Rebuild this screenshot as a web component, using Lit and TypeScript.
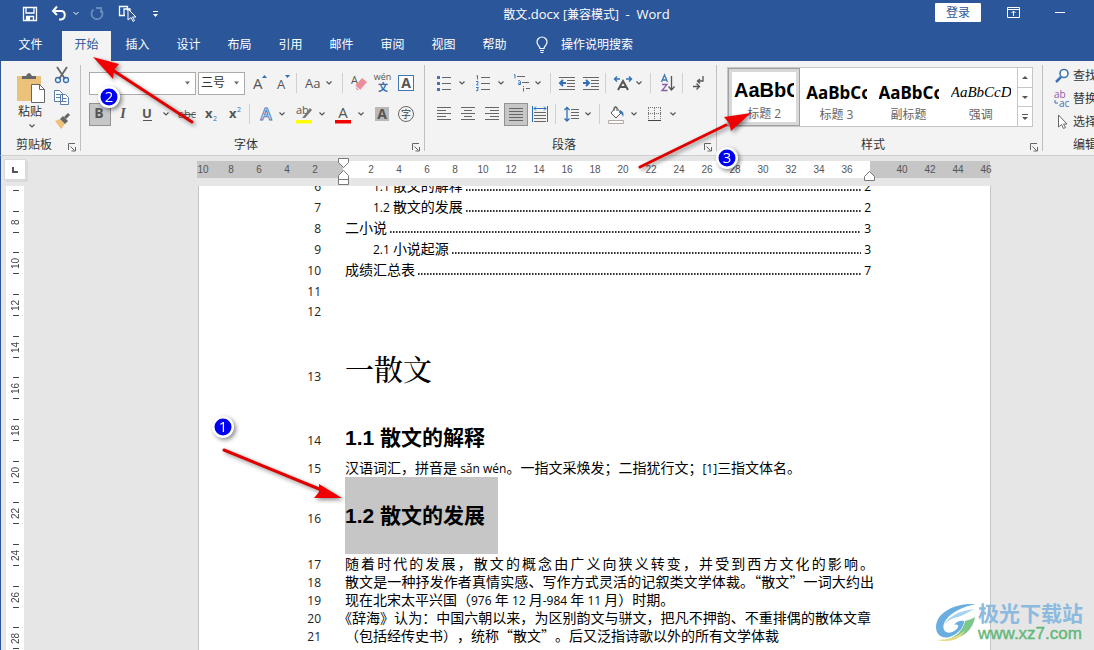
import { LitElement, html, css, svg } from "lit";
import { customElement, property } from "lit/decorators.js";

const chev = (x: number, y = 12) =>
  svg`<path d="M${x - 2.5} ${y - 1.5}l2.5 2.5 2.5-2.5" fill="none" stroke="#555" stroke-width="1.2"/>`;
const lines = (x1: number, x2: number, ys: number[], c = "#666") =>
  svg`<path d="${ys.map((y) => `M${x1} ${y}H${x2}`).join("")}" stroke="${c}" fill="none"/>`;
const icon = (w: number, body: unknown, h = 24) =>
  html`<svg width="${w}" height="${h}" viewBox="0 0 ${w} ${h}" aria-hidden="true">${body}</svg>`;

type Tool = { label?: string; w: number; body?: unknown; on?: boolean };

const fontTop: Tool[] = [
  { label: "增大字号", w: 28, body: svg`<text x="8" y="18" class="g" font-size="15">A</text><path d="M17 7l2.5-3 2.5 3z" fill="#2f6fb5"/>` },
  { label: "减小字号", w: 22, body: svg`<text x="4" y="18" class="g" font-size="13">A</text><path d="M12 4l2.5 3 2.5-3z" fill="#2f6fb5"/>` },
  { w: 4 },
  { label: "更改大小写", w: 42, body: svg`<text x="6" y="17" class="g" font-size="13">Aa</text>${chev(30)}` },
  { w: 4 },
  { label: "清除格式", w: 26, body: svg`<text x="6" y="13" class="g" font-size="11">A</text><path d="M10 15l7-8 5 4-7 8h-3z" fill="#ea8d9c"/><path d="M10 15l5 4" stroke="#fff"/>` },
  { label: "拼音指南", w: 24, body: svg`<text x="11.500" y="9" class="g" font-size="9" text-anchor="middle">wén</text><text x="12" y="20" class="cj" font-size="10" fill="#2f6fb5" font-weight="700" text-anchor="middle">文</text>` },
  { label: "字符边框", w: 24, body: svg`<rect x="3.500" y="4.500" width="15" height="15" fill="#fff" stroke="#4177b5"/><text x="11" y="17" class="g" font-weight="700" font-size="14" text-anchor="middle">A</text>` },
];
const fontBottom: Tool[] = [
  { label: "加粗", w: 22, on: true, body: svg`<text x="10" y="16" class="g" font-size="14" font-weight="700" text-anchor="middle">B</text>` },
  { label: "倾斜", w: 24, body: svg`<text x="12" y="16" class="s" font-size="14" font-style="italic" font-weight="700" text-anchor="middle">I</text>` },
  { label: "下划线", w: 38, body: svg`<text x="12" y="16" class="g" font-size="13" font-weight="700" text-anchor="middle">U</text><path d="M8 18.500h9" stroke="#555"/>${chev(31)}` },
  { label: "删除线", w: 26, body: svg`<text x="14" y="16" class="g" font-size="11" text-anchor="middle">abc</text><path d="M5 12.500h18" stroke="#555"/>` },
  { label: "下标", w: 24, body: svg`<text x="6" y="16" class="g" font-size="13" font-weight="700">x</text><text x="14" y="19" fill="#2f6fb5" font-size="7">2</text>` },
  { label: "上标", w: 24, body: svg`<text x="6" y="16" class="g" font-size="13" font-weight="700">x</text><text x="14" y="10" fill="#2f6fb5" font-size="7">2</text>` },
  { w: 6 },
  { label: "文本效果", w: 38, body: svg`<text x="13" y="18" font-size="17" font-weight="600" fill="#fff" stroke="#4a80bd" text-anchor="middle">A</text>${chev(29)}` },
  { label: "突出显示", w: 38, body: svg`<text x="5" y="12" class="g" font-size="11">ab</text><path d="M12 15l7-9 2 2-7 8h-3z" fill="#777"/><path d="M5 18h16v3.500H5z" fill="#ffff00"/>${chev(31)}` },
  { label: "字体颜色", w: 40, body: svg`<text x="14" y="16" class="g" font-size="15" text-anchor="middle">A</text><path d="M6 18h16v3.500H6z" fill="#f00000"/>${chev(32)}` },
  { label: "字符底纹", w: 26, body: svg`<path d="M6 5h14v14H6z" fill="#b9b9b9"/><text x="13" y="17" class="g" font-size="14" font-weight="700" text-anchor="middle">A</text>` },
  { label: "带圈字符", w: 22, body: svg`<circle cx="11" cy="12" r="7.500" fill="none" stroke="#666"/><text x="11" y="16" class="cj" font-size="10" fill="#444" text-anchor="middle">字</text>` },
];
const paraTop: Tool[] = [
  { label: "项目符号", w: 38, body: svg`<path d="M5 5h3v3H5zM5 11h3v3H5zM5 17h3v3H5z" fill="#3c78b8"/>${lines(10, 19, [6.5, 12.5, 18.5])}${chev(30)}` },
  { label: "编号", w: 40, body: svg`<path d="M6.500 5l1-.5v4M6 10.500h2v1.500L6.500 14H8.500M6 16.500h2.500l-1 1.500q2 1.500-1.500 2" stroke="#3c78b8" fill="none"/>${lines(11, 20, [6.5, 12.5, 18.5])}${chev(31)}` },
  { label: "多级列表", w: 38, body: svg`<path d="M4 4l1-.5v4M8 10q2.500-1 2.500.5V13.500H8.500q-1-1.500 2-2M13.500 17v3.500M13.500 15v1" stroke="#3c78b8" fill="none"/>${lines(7, 15, [5.5])}${lines(12, 19, [11.5])}${lines(16, 20, [17.5])}${chev(28)}` },
  { w: 6 },
  { label: "减少缩进", w: 26, body: svg`${lines(5, 21, [6.5, 18.5])}${lines(13, 21, [9.5, 12.5, 15.5])}<path d="M12 12H6M9 9l-3 3 3 3" stroke="#2f6fb5" stroke-width="2" fill="none"/>` },
  { label: "增加缩进", w: 22, body: svg`${lines(3, 19, [6.5, 18.5])}${lines(11, 19, [9.5, 12.5, 15.5])}<path d="M3 12h6M6 9l3 3-3 3" stroke="#2f6fb5" stroke-width="2" fill="none"/>` },
  { w: 8 },
  { label: "中文版式", w: 38, body: svg`<path d="M8 19l5-9 5 9M10 16h6" stroke="#555" stroke-width="2" fill="none"/><path d="M10 8H5M7 5.500L4.500 8 7 10.500M16 8h5M19 5.500L21.500 8 19 10.500" stroke="#2f6fb5" stroke-width="1.400" fill="none"/>${chev(29)}` },
  { w: 6 },
  { label: "排序", w: 26, body: svg`<path d="M7.500 11l3-7 3 7M8.500 9h4" stroke="#3c78b8" stroke-width="1.300" fill="none"/><path d="M8 13.500h5l-5 6h5.500" stroke="#8a5ba5" stroke-width="1.300" fill="none"/><path d="M17.500 5v14M14.500 15.500l3 3.500 3-3.500" stroke="#555" stroke-width="1.300" fill="none"/>` },
  { w: 6 },
  { label: "显示编辑标记", w: 26, body: svg`<path d="M17 5v5h-5M14 8l-2.500 2L14 12.500M7 15.500h6M10.500 12.500l3 3-3 3" stroke="#555" stroke-width="1.300" fill="none"/>` },
];
const paraBottom: Tool[] = [
  { label: "左对齐", w: 24, body: svg`${lines(5, 19, [5.5, 11.5, 17.5])}${lines(5, 14, [8.5, 14.5])}` },
  { label: "居中", w: 24, body: svg`${lines(5, 19, [5.5, 11.5, 17.5])}${lines(8, 16, [8.5, 14.5])}` },
  { label: "右对齐", w: 24, body: svg`${lines(5, 19, [5.5, 11.5, 17.5])}${lines(10, 19, [8.5, 14.5])}` },
  { label: "两端对齐", w: 24, on: true, body: svg`${lines(5, 19, [6.5, 9.5, 12.5, 15.5, 18.5])}` },
  { label: "分散对齐", w: 24, body: svg`<path d="M4.500 4v16M19.500 4v16" stroke="#2f6fb5"/><path d="M6 6.500h12M8 4.500l-2 2 2 2M16 4.500l2 2-2 2" stroke="#2f6fb5" fill="none"/>${lines(6, 18, [10.5, 13.5, 16.5, 19.5])}` },
  { w: 8 },
  { label: "行距", w: 36, body: svg`<path d="M7 5v14M4.500 8L7 5.500 9.500 8M4.500 16.500L7 19l2.500-2.500" stroke="#2f6fb5" stroke-width="1.300" fill="none"/>${lines(11, 19, [7.5, 10.5, 13.5, 16.5])}${chev(28)}` },
  { w: 8 },
  { label: "底纹", w: 40, body: svg`<path d="M12 5l5 6-5 5-5-5z" fill="#fff" stroke="#555"/><path d="M10 9V5.500q1.500-2 3 0V9" fill="none" stroke="#555"/><path d="M16 8q5 2 3 7-1-4-4-4z" fill="#3c78b8"/><path d="M4.500 18.500h15v3h-15z" fill="#fff" stroke="#b5a8a0"/>${chev(30)}` },
  { label: "边框", w: 38, body: svg`<path d="M4.500 6v12M10.500 6v12M16.500 6v12M4 5.500h13M4 11.500h13" stroke="#777" stroke-dasharray="1 1" fill="none"/><path d="M4 18.500h13" stroke="#444"/>${chev(29)}` },
];

@customElement("ribbon-group")
export class RibbonGroup extends LitElement {
  @property() name = "";
  static styles = css`
    :host { display: flex; flex-direction: column; box-sizing: border-box; position: relative; }
    :host::after { content: ""; position: absolute; right: 0; top: 4px; bottom: 4px; width: 1px; background: #c0c0c0; }
    .content { flex: 1; display: flex; min-width: 0; }
    .foot { display: flex; height: 20px; align-items: center; font-size: 12px; color: #333; }
    .name { flex: 1; text-align: center; white-space: nowrap; }
    button { width: 14px; height: 16px; padding: 4px 0 0; border: 0; background: none; display: block; }
    svg { display: block; }
  `;
  render() {
    return html`<div class="content"><slot></slot></div>
      <div class="foot"><span class="name">${this.name}</span>
        <button aria-label="${this.name}设置">${icon(10, svg`<path d="M1.500 8V1.500H8M3.500 4.500l4 4M8.500 5v4h-4" stroke="#666" fill="none"/>`, 10)}</button></div>`;
  }
}

const latin = (s: string) => html`<span class="latin">${s}</span>`;
const toc = [
  { n: 6, sub: true, num: "1.1", t: "散文的解释", p: 2 },
  { n: 7, sub: true, num: "1.2", t: "散文的发展", p: 2 },
  { n: 8, sub: false, num: "", t: "二小说", p: 3 },
  { n: 9, sub: true, num: "2.1", t: "小说起源", p: 3 },
  { n: 10, sub: false, num: "", t: "成绩汇总表", p: 7 },
];

@customElement("app-root")
export class AppRoot extends LitElement {
  static styles = css`
    :host { display: flex; flex-direction: column; height: 100vh; overflow: hidden; position: relative; background: #e6e6e6; font: 12px/16px "Open Sans", "Noto Sans CJK SC", sans-serif; color: #333; }
    * { box-sizing: border-box; }
    svg { display: block; flex: none; }
    button { font: inherit; color: inherit; border: 0; background: none; padding: 0; display: block; }
    .g { fill: #555; }
    .s { fill: #555; font-family: "Liberation Serif", serif; }
    .cj { font-family: "Noto Sans CJK SC", sans-serif; }

    .title { display: flex; height: 28px; flex: none; align-items: center; background: #2b579a; color: #fff; }
    .quick { display: flex; width: 170px; padding-left: 16px; }
    .caption { flex: 1; padding-left: 68px; text-align: center; white-space: pre; }
    .caption span { font-size: 13px; }
    .login { width: 46px; height: 19px; margin-bottom: 3px; background: #fff; color: #2b579a; border-radius: 1px; line-height: 19px; }
    .winbtns { display: flex; width: 113px; padding-left: 9px; margin-bottom: 3px; }
    .tabs { display: flex; height: 33px; flex: none; align-items: flex-end; background: #2b579a; color: #fff; padding-left: 5px; }
    .tabs a { color: inherit; text-decoration: none; width: 51px; height: 30px; line-height: 28px; text-align: center; white-space: nowrap; }
    .tabs .file { margin-right: 6px; }
    .tabs .active { width: 49px; margin-right: 1px; background: #f3f3f3; color: #2b579a; }
    .tell { display: flex; height: 30px; align-items: center; gap: 12px; padding: 0 0 2px 15px; }

    .ribbon { display: flex; height: 95px; flex: none; background: #f3f3f3; border-bottom: 1px solid #d0d0d0; border-left: 1px solid #2b579a; }
    .clip { width: 80px; }
    .font { width: 344px; }
    .para { width: 292px; }
    .styles { flex: 1; min-width: 326px; }
    .edit { width: 51px; overflow: hidden; }
    .paste { width: 40px; margin-left: 9px; padding-top: 5px; text-align: center; color: #333; }
    .paste svg { margin: auto; }
    .clipside { display: flex; flex-direction: column; padding: 3px 0 0; }
    .toolrows { display: flex; flex-direction: column; gap: 7px; padding: 10px 0 0 8px; }
    .para .toolrows { padding-left: 7px; }
    .row { display: flex; height: 24px; align-items: center; }
    .row .on { background: #c6c6c6; outline: 1px solid #929292; outline-offset: -1px; height: 23px; display: flex; align-items: center; }
    .combo { display: flex; height: 23px; border: 1px solid #ababab; background: #fff; align-items: center; }
    .face { width: 107px; margin-right: 2px; }
    .size { width: 47px; }
    .combo input { border: 0; background: none; font: inherit; color: #333; min-width: 0; flex: 1; padding: 0 0 0 2px; outline: 0; }

    .gallery { display: flex; flex: 1; min-width: 0; height: 60px; margin: 6px 10px 0; background: #fff; border: 1px solid #c6c6c6; }
    .style { flex: 1 1 72px; min-width: 0; padding: 5px 6px 0; overflow: hidden; text-align: center; color: #666; }
    .style.chosen { border: 1px solid #a0a0a0; box-shadow: inset 0 0 0 3px #d8d8d8; padding: 4px 5px 0; }
    .sample { display: block; overflow: hidden; height: 30px; line-height: 31px; text-align: left; color: #000; white-space: nowrap; }
    .h2s { font: bold 20px/28px "Liberation Sans", sans-serif; }
    .h3s { font-weight: 700; font-size: 17px; font-family: "Noto Sans", sans-serif; }
    .ems { font: italic 15px/30px "Liberation Serif", serif; }
    .scroll { flex: none; width: 15px; border-left: 1px solid #c6c6c6; display: flex; flex-direction: column; }
    .scroll button { flex: 1; display: grid; place-items: center; }
    .scroll button + button { border-top: 1px solid #c6c6c6; }
    .edits { padding: 3px 0 0 9px; display: flex; flex-direction: column; }
    .edits button { display: flex; align-items: center; height: 23px; gap: 2px; white-space: nowrap; }
    .edits .lab { padding-left: 21px; line-height: 23px; white-space: nowrap; }

    .rulerbar { display: flex; height: 30px; flex: none; border-left: 1px solid #2b579a; }
    .corner { width: 196px; padding: 3px 0 0 3px; }
    .tabsel { width: 22px; height: 21px; background: #fff; border: 1px solid #d8d8d8; display: grid; place-items: center; box-shadow: 2px 2px 0 #dadada; }
    .ruler { flex: 1; min-width: 0; margin: 5px 104px 8px 0; display: flex; position: relative; font: 10px/18px "Liberation Sans", sans-serif; color: #555; background: #fff; }
    .ruler span { flex: 0 0 28px; text-align: center; }
    .neg, .pos, .out { display: flex; }
    .neg { width: 146px; overflow: hidden; justify-content: flex-end; padding-right: 14px; background: #c6c6c6; }
    .pos { flex: 1; min-width: 0; padding-left: 14px; }
    .out { width: 120px; padding-left: 18px; background: #c6c6c6; }
    .mark { position: absolute; left: 140px; top: -4px; }
    .rmark { position: absolute; right: 114px; top: 9px; }

    .work { flex: 1; display: flex; min-height: 0; overflow: hidden; border-left: 1px solid #2b579a; }
    .vruler { width: 18px; margin: 0 0 -9px 5px; background: #fff; display: flex; flex-direction: column; padding-top: 15px; font: 10px/12px "Liberation Sans", sans-serif; color: #444; position: relative; }
    .vruler::before { content: ""; position: absolute; left: 7px; top: 4px; width: 6px; height: 1px; background: #444; }
    .vcell { flex: 1; display: flex; flex-direction: column; align-items: center; justify-content: center; padding-left: 1px; }
    .vcell::before, .vcell::after { content: ""; width: 6px; height: 1px; background: #444; }
    .vcell span { writing-mode: vertical-rl; transform: rotate(180deg); height: 20px; text-align: center; line-height: 12px; }
    .page { flex: 1; min-width: 0; margin: 0 103px 0 174px; background: #fff; border-left: 1px solid #c6c6c6; border-right: 1px solid #c6c6c6; padding: 0 116px 0 94px; overflow: hidden; color: #000; font: 14px/21px "Noto Sans CJK SC", sans-serif; }
    .sheet { margin-top: -11px; }
    .line { display: flex; align-items: baseline; height: 18px; line-height: 18px; white-space: nowrap; text-spacing-trim: space-all; }
    .line > .no { width: 28px; margin-right: 24px; text-align: right; font-family: "Open Sans", sans-serif; font-size: 12px; color: #222; flex: none; }
    .line p { margin: 0; }
    .latin { font-family: "Open Sans", sans-serif; font-size: 12px; }
    .toc { height: 21px; line-height: 21px; margin-right: 3px; }
    .toc .entry { flex: 1; display: flex; color: inherit; text-decoration: none; gap: 3px; overflow: hidden; align-items: baseline; }
    .sub .entry { padding-left: 28px; }
    .dots { flex: 1; height: 2px; background: repeating-linear-gradient(90deg, #333 0 1px, #888 1px 2px, transparent 2px 3px); }
    .blank { height: 20px; line-height: 20px; }
    .line h1, .line h2 { margin: 0; font-weight: 400; }
    .lh1 { height: 96px; }
    .lh1 h1 { font: 500 29px/102px "Liberation Serif", "Noto Serif CJK SC", "Noto Sans CJK SC", serif; }
    .lh2 { height: 42px; }
    .line h2 { font: bold 21px/43px "Liberation Sans", "Noto Sans CJK SC", sans-serif; }
    .l15 { height: 19px; }
    .line.tall { height: 77px; }
    .line.tall h2 { line-height: 77px; background: #c6c6c6; padding-right: 13px; }
    .line .full { flex: 1; text-align: justify; text-align-last: justify; }
    .norm { text-spacing-trim: normal; }
    .trim { text-spacing-trim: trim-start; }
    .narrow .full { margin-right: 3px; }

    .notes { position: absolute; left: 0; top: 0; pointer-events: none; filter: drop-shadow(2px 2px 2px rgba(0,0,0,.45)); }
    .notes text { font: 15px "Open Sans", sans-serif; fill: #fff; }
    .brand { position: absolute; right: 11px; bottom: 6px; display: flex; align-items: center; }
    .brand div { display: flex; flex-direction: column; }
    .bname { font: 700 21px/23px "Noto Sans CJK SC", sans-serif; color: #8cbadf; }
    .burl { font: 17px/20px "Liberation Sans", sans-serif; color: #62b87a; -webkit-text-stroke: 0.4px #62b87a; }
  `;

  private tools(list: Tool[]) {
    return list.map((t) => t.label
      ? html`<button class="${t.on ? "on" : ""}" aria-label="${t.label}">${icon(t.w, t.body)}</button>`
      : icon(t.w, svg`<path d="M${t.w / 2 - 0.5} 2v20" stroke="#d0d0d0"/>`));
  }

  private badge(x: number, y: number, n: number) {
    return svg`<circle cx="${x}" cy="${y}" r="11" fill="#fff"/><circle cx="${x}" cy="${y}" r="8.500" fill="#0000f0"/><text x="${x}" y="${y + 5}" text-anchor="middle">${n}</text>`;
  }

  render() {
    const nums = (a: number[]) => a.map((n) => html`<span>${n}</span>`);
    return html`
      <header class="title">
        <div class="quick">
          <button aria-label="保存">${icon(28, svg`<path d="M7.500 5.500h13v13h-13zM10 6v5h8V6M10.500 18.500v-4h7v4" fill="none" stroke="#fff" stroke-width="1.300"/><path d="M11 15h3v3h-3z" fill="#fff"/>`)}</button>
          <button aria-label="撤消">${icon(38, svg`<path d="M13 4.500l-4 4.500 4 4M9.500 9H17c5 0 5 8 0 8.500h-2" fill="none" stroke="#fff" stroke-width="2"/><path d="M29.500 10l2.500 2.500 2.500-2.500" fill="none" stroke="#fff"/>`)}</button>
          <button aria-label="恢复">${icon(30, svg`<path d="M11.500 7.500a5.500 5.500 0 1 0 7 0M19 11V6h-5" fill="none" stroke="#6a8bbd" stroke-width="1.800"/>`)}</button>
          <button aria-label="触摸模式">${icon(28, svg`<path d="M13 13.500H7.500v-9h8v4M12 13V7h6v4" fill="none" stroke="#fff" stroke-width="1.300"/><path d="M16 7v11l3-2.500 2 4 1.500-1-2-3.500h3.500z" fill="#2b579a" stroke="#fff"/>`)}</button>
          <button aria-label="自定义">${icon(28, svg`<path d="M13 9.500h5" stroke="#fff"/><path d="M13 12h5l-2.500 3z" fill="#fff"/>`)}</button>
        </div>
        <div class="caption">散文<span>.docx </span>[兼容模式]<span>  -  Word</span></div>
        <button class="login">登录</button>
        <div class="winbtns">
          <button aria-label="功能区显示选项">${icon(46, svg`<path d="M17.500 6.500h12v10h-12zM17.500 8.500h12M23.500 15v-5M21.500 12l2-2 2 2" fill="none" stroke="#fff"/>`)}</button>
          <button aria-label="最小化">${icon(46, svg`<path d="M19 11.500h10" stroke="#fff"/>`)}</button>
        </div>
      </header>
      <nav class="tabs">
        <a class="file" href="#">文件</a><a class="active" href="#">开始</a>
        ${["插入", "设计", "布局", "引用", "邮件", "审阅", "视图", "帮助"].map((t) => html`<a href="#">${t}</a>`)}
        <button class="tell">${icon(14, svg`<path d="M5 12.500C5 10 2 9.500 2 6a5 5 0 0 1 10 0c0 3.500-3 4-3 6.500zM5 14.500h4M5.500 16.500h3" fill="none" stroke="#fff" stroke-width="1.200"/>`, 18)}<span>操作说明搜索</span></button>
      </nav>
      <section class="ribbon">
        <ribbon-group class="clip" name="剪贴板">
          <button class="paste">${icon(32, svg`<path d="M3 5h24v25H3z" fill="#eac27c"/><path d="M8 8V5h4q3-6 6 0h4v3z" fill="#666"/><path d="M17.500 13.500h8l5 5v13h-13z" fill="#fff" stroke="#666"/><path d="M25.500 13.500v5h5" fill="none" stroke="#666"/>`, 33)}粘贴<svg width="40" height="10" viewBox="0 0 40 10">${chev(22, 6)}</svg></button>
          <div class="clipside">
            <button aria-label="剪切">${icon(24, svg`<path d="M7 3l8 12M17 3L9 15" stroke="#666" stroke-width="1.800"/><circle cx="8" cy="16" r="2.500" fill="none" stroke="#2f6fb5" stroke-width="1.300"/><circle cx="16" cy="16" r="2.500" fill="none" stroke="#2f6fb5" stroke-width="1.300"/>`, 22)}</button>
            <button aria-label="复制">${icon(24, svg`<path d="M4.500 4.500h5l3 3v8h-8zM10.500 8.500h5l3 3v7h-8z" fill="#fff" stroke="#5a7ba6"/><path d="M6 8.500h4M6 11.500h4M12.500 12.500h4M12.500 15.500h4" stroke="#4a80bd"/>`, 23)}</button>
            <button aria-label="格式刷">${icon(24, svg`<path d="M5 12l5-2 5 5-4 5z" fill="#efc07c"/><path d="M10 10l3-3 5 5-3 3z" fill="#666"/><path d="M15 9l4-4" stroke="#666" stroke-width="3"/>`, 22)}</button>
          </div>
        </ribbon-group>
        <ribbon-group class="font" name="字体">
          <div class="toolrows">
            <div class="row">
              <div class="combo face"><input aria-label="字体"/>${icon(14, svg`<path d="M4 10.500h5l-2.500 3z" fill="#666"/>`)}</div>
              <div class="combo size"><input aria-label="字号" .value=${"三号"}/>${icon(14, svg`<path d="M4 10.500h5l-2.500 3z" fill="#666"/>`)}</div>
              ${this.tools(fontTop)}
            </div>
            <div class="row">${this.tools(fontBottom)}</div>
          </div>
        </ribbon-group>
        <ribbon-group class="para" name="段落">
          <div class="toolrows">
            <div class="row">${this.tools(paraTop)}</div>
            <div class="row">${this.tools(paraBottom)}</div>
          </div>
        </ribbon-group>
        <ribbon-group class="styles" name="样式">
          <div class="gallery">
            <button class="style chosen"><span class="sample h2s">AaBbC</span>标题 2</button>
            <button class="style"><span class="sample h3s">AaBbCc</span>标题 3</button>
            <button class="style"><span class="sample h3s">AaBbCc</span>副标题</button>
            <button class="style"><span class="sample ems">AaBbCcDc</span>强调</button>
            <div class="scroll">
              <button aria-label="上一行">${icon(8, svg`<path d="M1 6l3-3 3 3z" fill="#555"/>`, 8)}</button>
              <button aria-label="下一行">${icon(8, svg`<path d="M1 3l3 3 3-3z" fill="#555"/>`, 8)}</button>
              <button aria-label="其他">${icon(8, svg`<path d="M1 1.500h6" stroke="#555"/><path d="M1 4l3 3 3-3z" fill="#555"/>`, 8)}</button>
            </div>
          </div>
        </ribbon-group>
        <div class="edit"><div class="edits">
          <button>${icon(19, svg`<circle cx="12" cy="7.500" r="4" fill="#fff" stroke="#3c72b0" stroke-width="1.600"/><path d="M9 11l-5 5" stroke="#3c72b0" stroke-width="2.500"/>`, 20)}查找</button>
          <button>${icon(19, svg`<text x="2" y="9" font-size="10" fill="#8a5ba5">ab</text><text x="7" y="18" font-size="10" fill="#3c72b0">ac</text><path d="M3 11v3h3" stroke="#3c72b0" fill="none"/>`, 20)}替换</button>
          <button>${icon(19, svg`<path d="M6.500 3v12l3-2.500 2 4 2-1-2-3.500h3.500z" fill="#fff" stroke="#666"/>`, 20)}选择</button>
          <span class="lab">编辑</span>
        </div></div>
      </section>
      <div class="rulerbar">
        <div class="corner"><button class="tabsel" aria-label="制表符">${icon(8, svg`<path d="M2 1v5h5" fill="none" stroke="#555" stroke-width="2"/>`, 8)}</button></div>
        <div class="ruler">
          <div class="neg">${nums([10, 8, 6, 4, 2])}</div>
          <div class="pos">${nums(Array.from({ length: 18 }, (_, i) => 2 * i + 2))}</div>
          <div class="out">${nums([40, 42, 44, 46])}</div>
          <svg class="mark" width="13" height="30" viewBox="0 0 13 30"><path d="M1.500 1.500h10v4l-5 5-5-5zM6.500 13.500l5 5v4h-10v-4zM1.500 22.500h10v5h-10z" fill="#fff" stroke="#777"/></svg>
          <svg class="rmark" width="13" height="12" viewBox="0 0 13 12"><path d="M6.500 1.500l5 5v4h-10v-4z" fill="#fff" stroke="#777"/></svg>
        </div>
      </div>
      <main class="work">
        <div class="vruler">${[8, 10, 12, 14, 16, 18, 20, 22, 24, 26, 28].map((n) => html`<div class="vcell"><span>${n}</span></div>`)}</div>
        <article class="page"><div class="sheet">
          ${toc.map((t) => html`<div class="line toc ${t.sub ? "sub" : ""}"><span class="no">${t.n}</span><a class="entry" href="#">${t.num ? latin(t.num) : ""}<span>${t.t}</span><i class="dots"></i>${latin(String(t.p))}</a></div>`)}
          <div class="line blank"><span class="no">11</span><p>&nbsp;</p></div>
          <div class="line blank"><span class="no">12</span><p>&nbsp;</p></div>
          <div class="line lh1"><span class="no">13</span><h1>一散文</h1></div>
          <div class="line lh2"><span class="no">14</span><h2>1.1 散文的解释</h2></div>
          <div class="line l15"><span class="no">15</span><p>汉语词汇，拼音是 ${latin("sǎn wén")}。一指文采焕发；二指犹行文；${latin("[1]")}三指文体名。</p></div>
          <div class="line tall"><span class="no">16</span><h2>1.2 散文的发展</h2></div>
          <div class="line"><span class="no">17</span><p class="full">随着时代的发展，散文的概念由广义向狭义转变，并受到西方文化的影响。</p></div>
          <div class="line norm"><span class="no">18</span><p class="full">散文是一种抒发作者真情实感、写作方式灵活的记叙类文学体裁。“散文”一词大约出</p></div>
          <div class="line"><span class="no">19</span><p>现在北宋太平兴国（${latin("976")} 年 ${latin("12")} 月${latin("-984")} 年 ${latin("11")} 月）时期。</p></div>
          <div class="line trim narrow"><span class="no">20</span><p class="full">《辞海》认为：中国六朝以来，为区别韵文与骈文，把凡不押韵、不重排偶的散体文章</p></div>
          <div class="line"><span class="no">21</span><p>（包括经传史书），统称“散文”。后又泛指诗歌以外的所有文学体裁</p></div>
        </div></article>
      </main>
      <div class="brand">
        ${icon(44, svg`<path d="M42 2C22 1 3 9 2 25c0 9 8 13 16 9 7-3 12-9 12-15-4-1-8 1-10 4 3-1 5 0 4 2-2 4-8 7-12 5C5 25 12 8 42 2z" fill="#6aaee0"/><path d="M40 7C24 9 14 15 10 23c3-4 8-7 14-8 4-1 7-3 16-8z" fill="#a6d3ef"/><path d="M41 15C39 28 29 37 12 38c10-3 17-9 19-19 3-1 7-2 10-4z" fill="#7cc78b"/><path d="M2 38c12 0 22-3 29-10-4 9-13 13-29 10z" fill="#e6db7c"/>`, 42)}
        <div><span class="bname">极光下载站</span><span class="burl">www.xz7.com</span></div>
      </div>
      <svg class="notes" width="760" height="510" viewBox="0 0 760 510">
        <g stroke="#e00000" stroke-width="3" stroke-linecap="round"><path d="M192 122L114 71M224 450l100 41M640 167l86-42"/></g>
        <g fill="#f00000"><path d="M93 57l26 7-5 6-1 9zM342 498l-28 0 5-6 0-8zM751 113l-20 18-2-8-5-6z"/></g>
        ${this.badge(109, 97, 2)}${this.badge(223, 427, 1)}${this.badge(727, 158, 3)}
      </svg>`;
  }
}
